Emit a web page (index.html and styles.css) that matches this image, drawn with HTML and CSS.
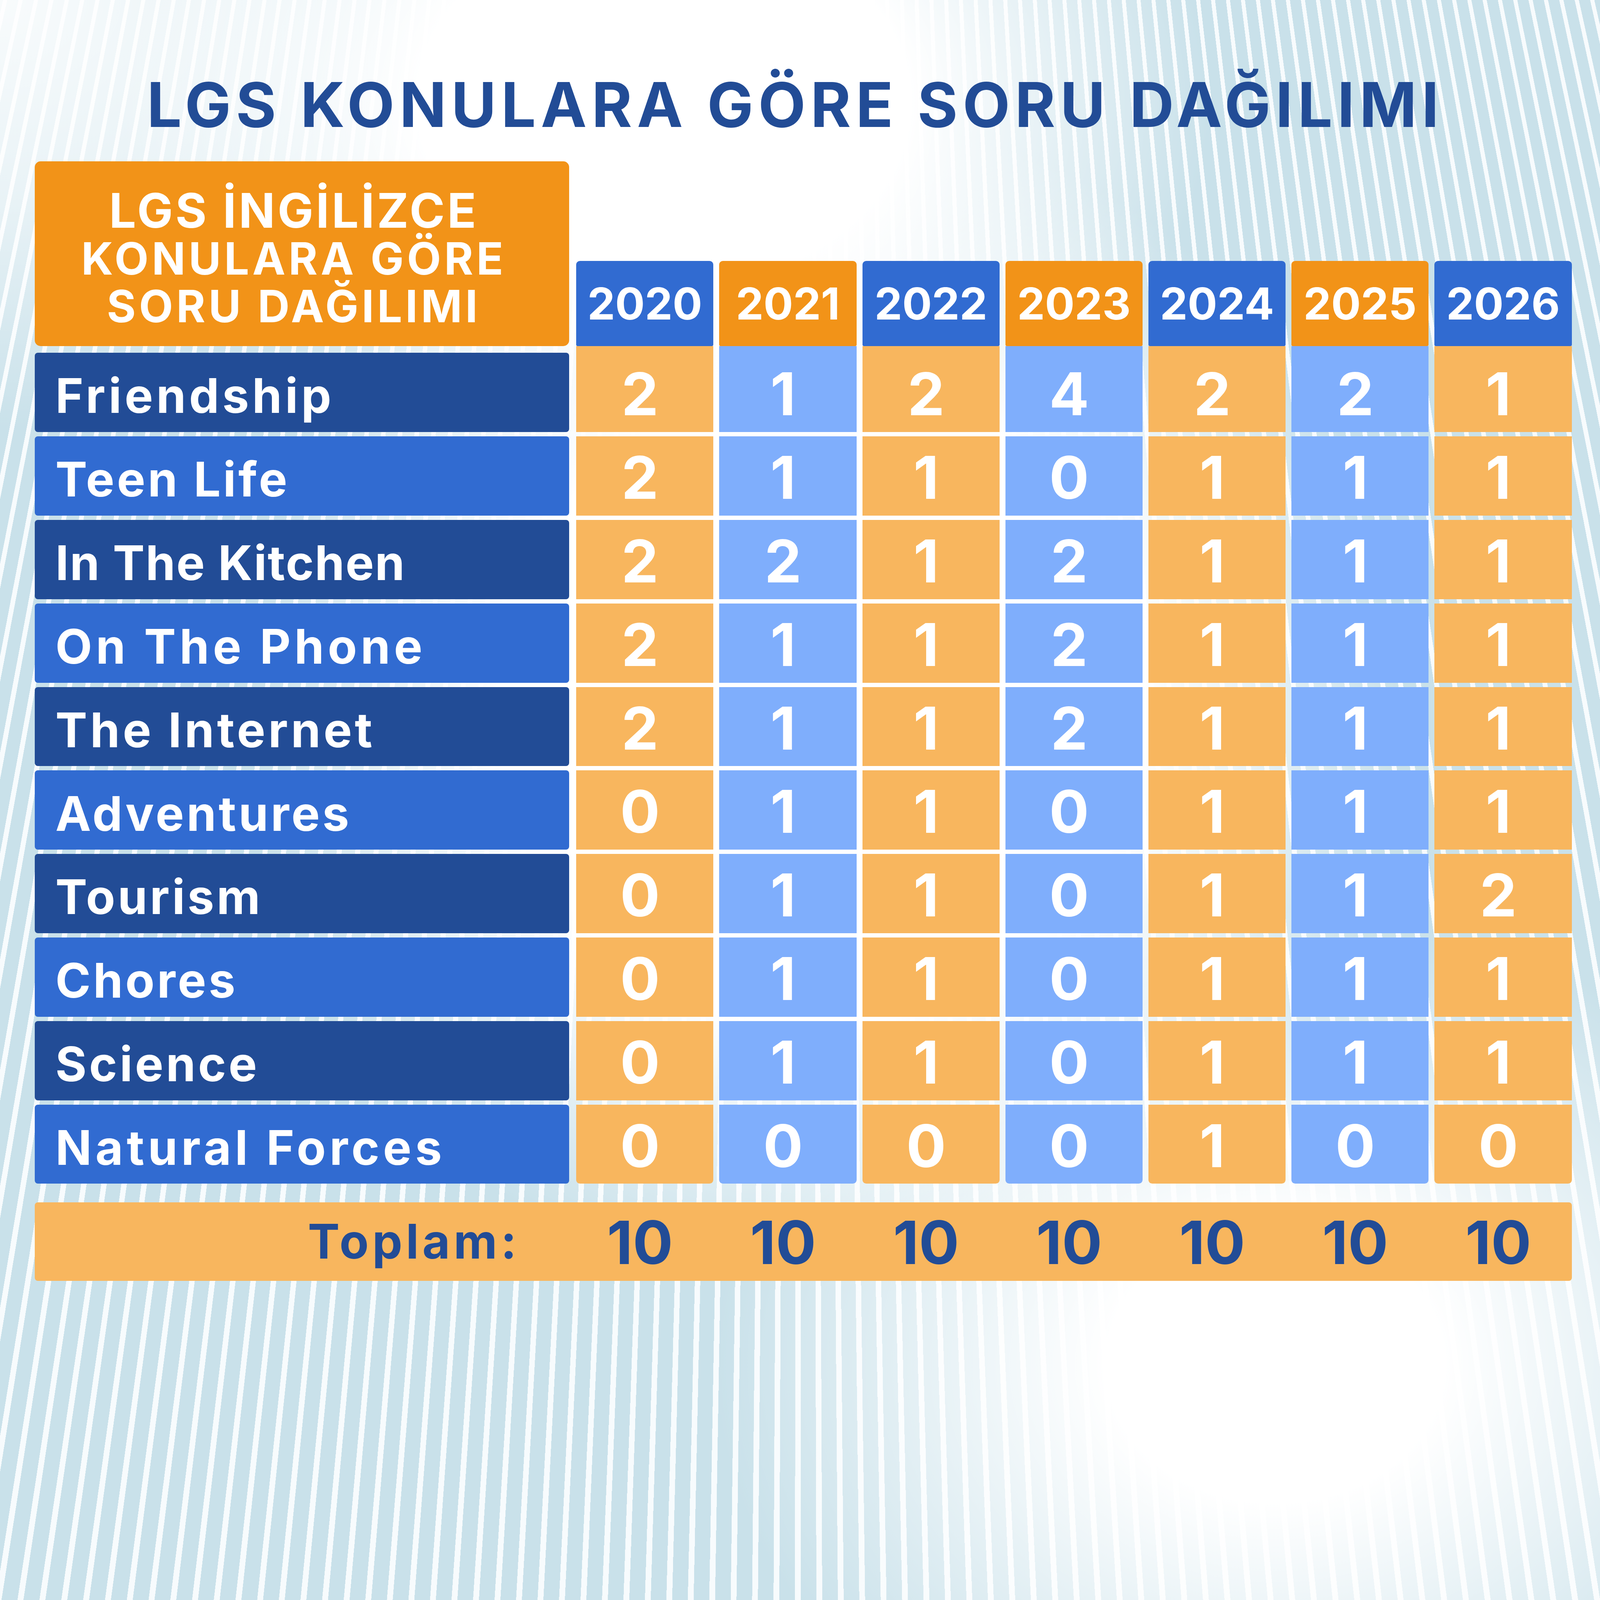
FILE: index.html
```html
<!DOCTYPE html>
<html lang="tr">
<head>
<meta charset="utf-8">
<title>LGS Konulara Göre Soru Dağılımı</title>
<link rel="stylesheet" href="styles.css">
</head>
<body>
<h1 class="title">LGS KONULARA GÖRE SORU DAĞILIMI</h1>
<div class="table">
  <div class="labels">
    <div class="head-box">
      <div class="hl hl1">LGS İNGİLİZCE</div>
      <div class="hl">KONULARA GÖRE</div>
      <div class="hl">SORU DAĞILIMI</div>
    </div>
    <div class="topic dark sp-8">Friendship</div>
    <div class="topic mid">Teen Life</div>
    <div class="topic dark sp-2">In The Kitchen</div>
    <div class="topic mid sp-9">On The Phone</div>
    <div class="topic dark sp-7">The Internet</div>
    <div class="topic mid">Adventures</div>
    <div class="topic dark">Tourism</div>
    <div class="topic mid">Chores</div>
    <div class="topic dark">Science</div>
    <div class="topic mid sp-9">Natural Forces</div>
  </div>
  <div class="col col-a">
    <div class="year">2020</div>
    <div class="val first">2</div><div class="val">2</div><div class="val">2</div><div class="val">2</div><div class="val">2</div><div class="val">0</div><div class="val">0</div><div class="val">0</div><div class="val">0</div><div class="val last">0</div>
  </div>
  <div class="col col-b">
    <div class="year">2021</div>
    <div class="val first">1</div><div class="val">1</div><div class="val">2</div><div class="val">1</div><div class="val">1</div><div class="val">1</div><div class="val">1</div><div class="val">1</div><div class="val">1</div><div class="val last">0</div>
  </div>
  <div class="col col-a">
    <div class="year">2022</div>
    <div class="val first">2</div><div class="val">1</div><div class="val">1</div><div class="val">1</div><div class="val">1</div><div class="val">1</div><div class="val">1</div><div class="val">1</div><div class="val">1</div><div class="val last">0</div>
  </div>
  <div class="col col-b">
    <div class="year">2023</div>
    <div class="val first">4</div><div class="val">0</div><div class="val">2</div><div class="val">2</div><div class="val">2</div><div class="val">0</div><div class="val">0</div><div class="val">0</div><div class="val">0</div><div class="val last">0</div>
  </div>
  <div class="col col-a">
    <div class="year">2024</div>
    <div class="val first">2</div><div class="val">1</div><div class="val">1</div><div class="val">1</div><div class="val">1</div><div class="val">1</div><div class="val">1</div><div class="val">1</div><div class="val">1</div><div class="val last">1</div>
  </div>
  <div class="col col-b">
    <div class="year">2025</div>
    <div class="val first">2</div><div class="val">1</div><div class="val">1</div><div class="val">1</div><div class="val">1</div><div class="val">1</div><div class="val">1</div><div class="val">1</div><div class="val">1</div><div class="val last">0</div>
  </div>
  <div class="col col-a">
    <div class="year">2026</div>
    <div class="val first">1</div><div class="val">1</div><div class="val">1</div><div class="val">1</div><div class="val">1</div><div class="val">1</div><div class="val">2</div><div class="val">1</div><div class="val">1</div><div class="val last">0</div>
  </div>
</div>
<div class="total">
  <div class="tlabel">Toplam:</div>
  <div class="tval">10</div>
  <div class="tval">10</div>
  <div class="tval">10</div>
  <div class="tval">10</div>
  <div class="tval">10</div>
  <div class="tval">10</div>
  <div class="tval">10</div>
</div>
</body>
</html>
```
FILE: styles.css
```css
html, body {
  margin: 0;
  padding: 0;
}
body {
  width: 4096px;
  height: 100vh;
  min-height: 3493px;
  overflow: hidden;
  font-family: Inter, "Noto Sans", "DejaVu Sans", sans-serif;
  font-weight: 700;
  background-color: #ffffff;
  background-repeat: no-repeat;
  background-image:
    radial-gradient(ellipse 1437px 1175px at 3265px 3493px, #ffffff 30%, rgba(255,255,255,0) 100%),
    radial-gradient(ellipse 1400px 1045px at 1700px 261px, #ffffff 45%, rgba(255,255,255,0) 100%),
    radial-gradient(ellipse 1500px 1100px at 0px 0px, rgba(255,255,255,0.88) 0%, rgba(255,255,255,0.6) 45%, rgba(255,255,255,0) 100%),
    radial-gradient(ellipse 1500px 1500px at 2100px 1800px, #ffffff 55%, rgba(255,255,255,0) 100%),
    repeating-conic-gradient(from 0deg at 2050px -9000px, #f7fbfd 0deg 0.065deg, #c9e1ea 0.065deg 0.24deg);
}
.title {
  margin: 0;
  padding: 188.6px 24px 0 0;
  text-align: center;
  font-size: 157.8px;
  line-height: 157.8px;
  font-weight: 700;
  letter-spacing: 12.3px;
  color: #224c96;
}
.table {
  display: flex;
  align-items: flex-end;
  margin: 66.3px 0 0 88.8px;
}
.labels {
  width: 1367.9px;
  display: flex;
  flex-direction: column;
  gap: 10.93px;
  margin-right: 18.45px;
}
.head-box {
  height: 473.5px;
  box-sizing: border-box;
  margin-bottom: 6.15px;
  padding: 65.6px 41px 0 0;
  background: #f29318;
  border-radius: 15px;
  color: #ffffff;
  text-align: center;
}
.hl {
  font-size: 113.4px;
  line-height: 122.3px;
  letter-spacing: 8px;
  white-space: nowrap;
}
.hl1 {
  font-size: 122.3px;
  letter-spacing: 6.2px;
}
.topic {
  height: 202.9px;
  box-sizing: border-box;
  padding: 49.2px 0 0 53px;
  font-size: 122.3px;
  line-height: 122.3px;
  letter-spacing: 6.2px;
  color: #ffffff;
  border-radius: 8px;
  white-space: nowrap;
}
.sp-2 { letter-spacing: 2.5px; }
.sp-7 { letter-spacing: 7.3px; }
.sp-8 { letter-spacing: 8px; }
.sp-9 { letter-spacing: 9.2px; }
.dark { background: #224c96; }
.mid { background: #316bd1; }
.col {
  width: 351.2px;
  display: flex;
  flex-direction: column;
  gap: 10.93px;
  margin-right: 15.03px;
}
.col:last-child { margin-right: 0; }
.year {
  height: 218.6px;
  box-sizing: border-box;
  margin-bottom: -10.93px;
  padding-top: 53.3px;
  font-size: 112.7px;
  line-height: 112.7px;
  text-align: center;
  color: #ffffff;
  border-radius: 9.6px 9.6px 4px 4px;
}
.val {
  height: 202.9px;
  box-sizing: border-box;
  padding: 30.1px 24.6px 0 0;
  font-size: 151px;
  line-height: 151px;
  text-align: center;
  color: #ffffff;
}
.val.first {
  height: 220px;
  padding-top: 47.1px;
}
.val.last {
  border-radius: 0 0 9.6px 9.6px;
}
.col-a .year { background: #316bd1; }
.col-a .val { background: #f8b65e; }
.col-b .year { background: #f29318; }
.col-b .val { background: #7faefc; }
.total {
  display: flex;
  align-items: flex-start;
  width: 3934.8px;
  height: 201.6px;
  margin: 47.1px 0 0 88.8px;
  background: #f8b65e;
  border-radius: 8px;
  color: #224c96;
}
.tlabel {
  width: 1367.9px;
  box-sizing: border-box;
  margin-right: 18.45px;
  padding: 39.6px 125px 0 0;
  font-size: 122.3px;
  line-height: 122.3px;
  letter-spacing: 9px;
  text-align: right;
}
.tval {
  width: 351.2px;
  box-sizing: border-box;
  margin-right: 15.03px;
  padding: 26px 24.6px 0 0;
  font-size: 153px;
  line-height: 153px;
  text-align: center;
}
.tval:last-child { margin-right: 0; }
```
